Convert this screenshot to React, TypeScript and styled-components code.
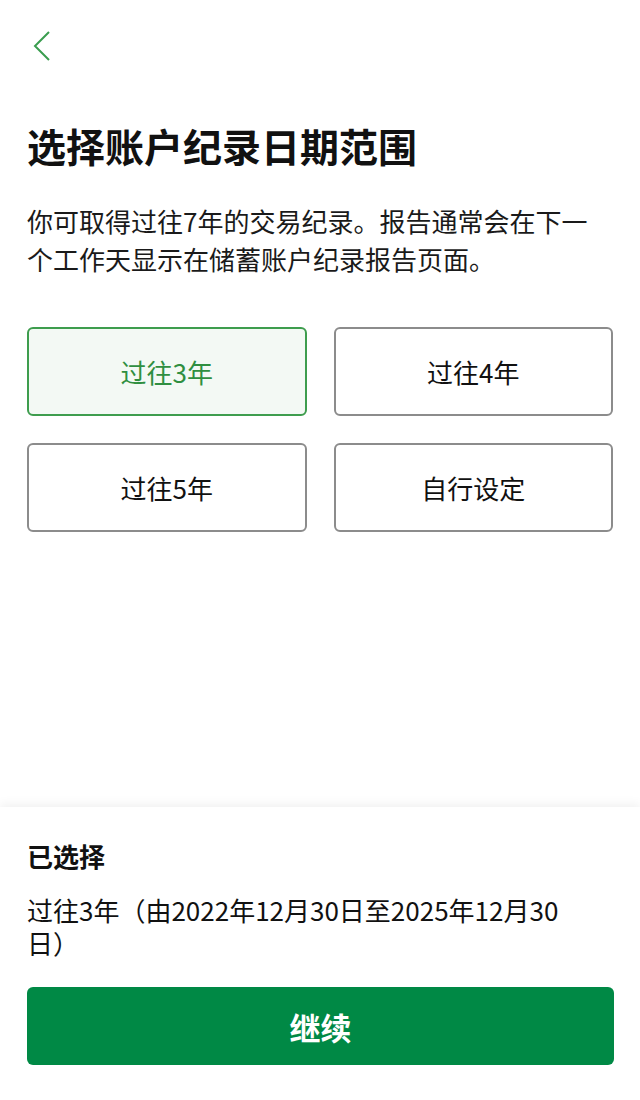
import styled, { createGlobalStyle } from "styled-components";

const GlobalStyle = createGlobalStyle`
  html, body {
    margin: 0;
    padding: 0;
    background: #ffffff;
  }
  body {
    font-family: "Noto Sans CJK SC", "Noto Sans", sans-serif;
    color: #111111;
  }
`;

const Page = styled.div`
  min-height: 1100px;
  display: flex;
  flex-direction: column;
`;

const Header = styled.div`
  height: 92px;
  display: flex;
  align-items: center;
  padding-left: 31px;
`;

const BackButton = styled.button`
  border: none;
  background: none;
  padding: 0;
  width: 22px;
  height: 32px;
  display: flex;
  align-items: center;
  justify-content: center;
  cursor: pointer;
`;

const Main = styled.main`
  flex: 1;
  padding: 0 27px;
`;

const Title = styled.h1`
  margin: 29px 0 0;
  font-size: 39px;
  line-height: 48px;
  font-weight: 700;
  color: #111111;
`;

const Intro = styled.p`
  margin: 33px 0 0;
  font-size: 26px;
  line-height: 38px;
  color: #1a1a1a;
`;

const OptionGrid = styled.div`
  margin-top: 49px;
  display: grid;
  grid-template-columns: 1fr 1fr;
  gap: 27px;
`;

const Option = styled.button<{ $selected?: boolean }>`
  height: 89px;
  border-radius: 6px;
  border: 2px solid ${(p) => (p.$selected ? "#3e9d4e" : "#8c8c8c")};
  background: ${(p) => (p.$selected ? "#f3f9f4" : "#ffffff")};
  color: ${(p) => (p.$selected ? "#2f8f40" : "#111111")};
  font-family: "Noto Sans CJK SC", "Noto Sans", sans-serif;
  font-size: 26px;
  cursor: pointer;
`;

const Sheet = styled.section`
  padding: 32px 26px 35px 27px;
  box-shadow: 0 -3px 10px rgba(0, 0, 0, 0.06);
  background: #ffffff;
`;

const SheetLabel = styled.div`
  font-size: 26px;
  line-height: 34px;
  font-weight: 700;
`;

const SheetValue = styled.div`
  margin-top: 20px;
  max-width: 570px;
  font-size: 26px;
  line-height: 33px;
`;

const ContinueButton = styled.button`
  margin-top: 28px;
  width: 100%;
  height: 78px;
  border: none;
  border-radius: 6px;
  background: #008945;
  color: #ffffff;
  font-family: "Noto Sans CJK SC", "Noto Sans", sans-serif;
  font-size: 31px;
  font-weight: 700;
  cursor: pointer;
`;

const options = ["过往3年", "过往4年", "过往5年", "自行设定"];

export default function App() {
  const selected = "过往3年";

  return (
    <Page>
      <GlobalStyle />
      <Header>
        <BackButton aria-label="返回">
          <svg width="18" height="30" viewBox="0 0 18 30">
            <path d="M16 1 L2 15 L16 29" fill="none" stroke="#3a9d4f" strokeWidth="2" />
          </svg>
        </BackButton>
      </Header>
      <Main>
        <Title>选择账户纪录日期范围</Title>
        <Intro>你可取得过往7年的交易纪录。报告通常会在下一个工作天显示在储蓄账户纪录报告页面。</Intro>
        <OptionGrid>
          {options.map((o) => (
            <Option key={o} $selected={o === selected}>
              {o}
            </Option>
          ))}
        </OptionGrid>
      </Main>
      <Sheet>
        <SheetLabel>已选择</SheetLabel>
        <SheetValue>过往3年（由2022年12月30日至2025年12月30日）</SheetValue>
        <ContinueButton>继续</ContinueButton>
      </Sheet>
    </Page>
  );
}
